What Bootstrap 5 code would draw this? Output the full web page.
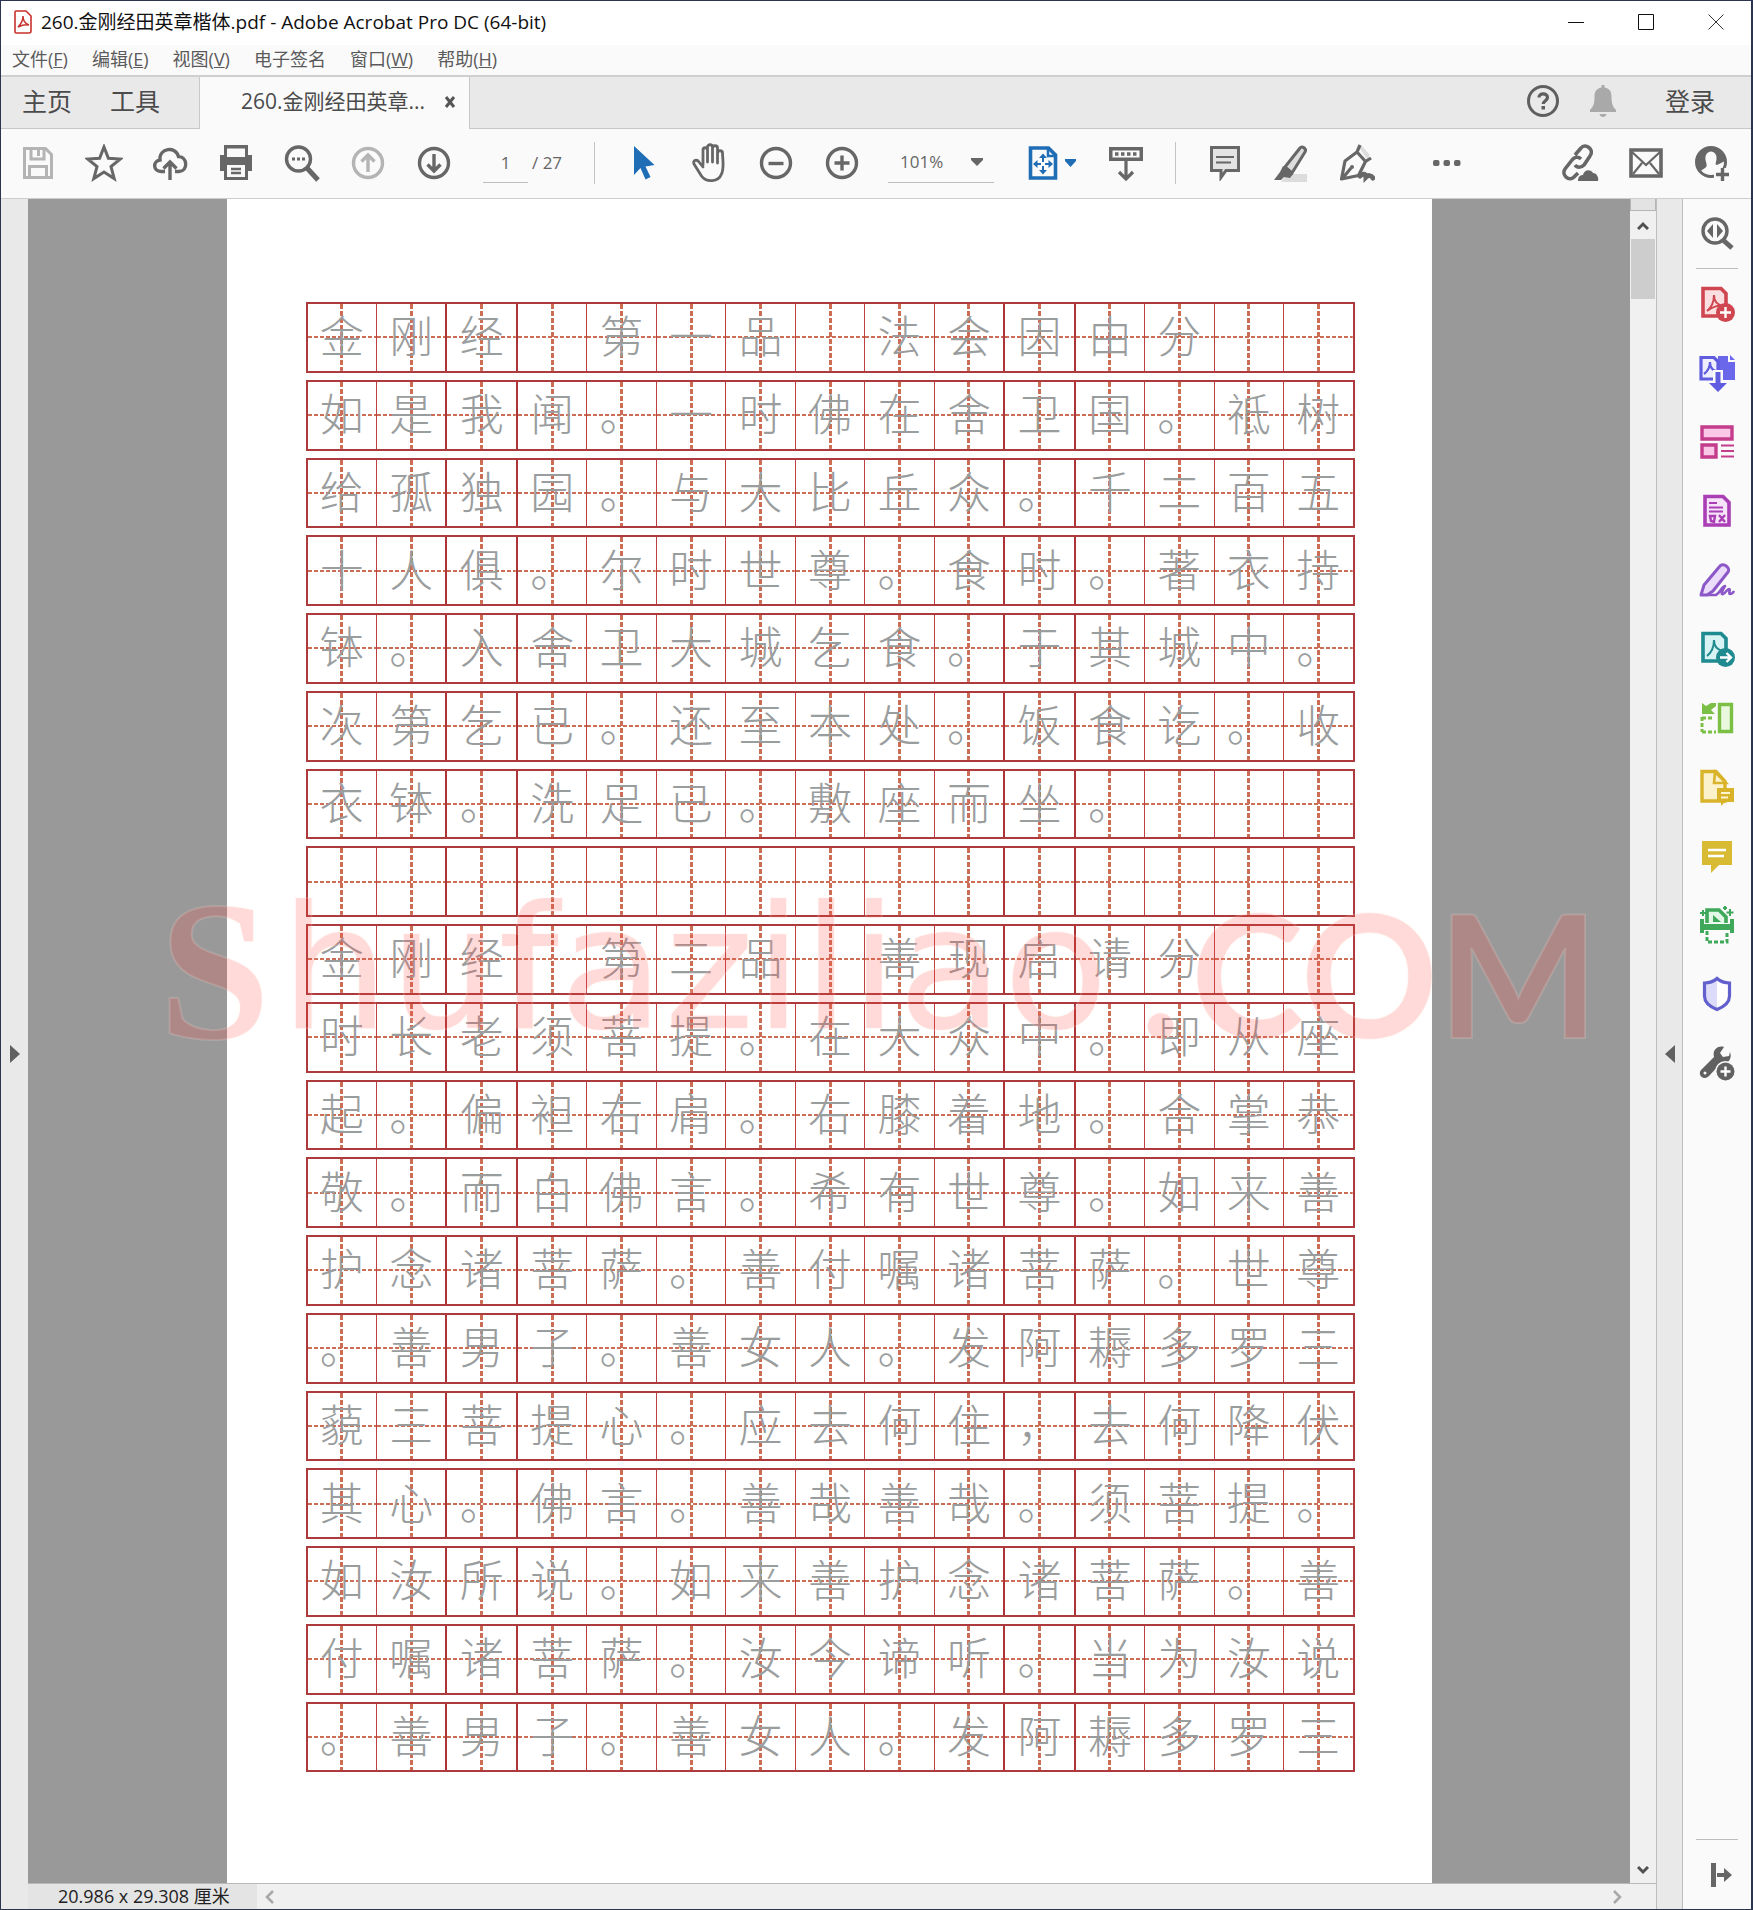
<!DOCTYPE html>
<html lang="zh-CN">
<head>
<meta charset="utf-8">
<meta name="viewport" content="width=device-width, initial-scale=1">
<title>260.金刚经田英章楷体.pdf - Adobe Acrobat Pro DC (64-bit)</title>
<link href="https://cdn.jsdelivr.net/npm/bootstrap@5.3.0/dist/css/bootstrap.min.css" rel="stylesheet">
<style>
  body { font-family: "Open Sans", "Noto Sans CJK SC", sans-serif; color: #4b4b4b; font-size: 18px; }
  .app-window { border: 1px solid #2b3550; border-right-width: 2px; background: #fafafa; }
  svg { display: block; flex: none; }
  .app-window button { border: 0; background: none; padding: 0; color: inherit; }

  .title-bar { height: 44px; background: #fff; color: #111; padding: 0 0 2px 12px; font-size: 19px; }
  .title-bar .win-btn { width: 70px; height: 42px; }
  .menu-bar { height: 30px; padding-left: 11px; gap: 24px; color: #5a5a5a; }
  .menu-bar a { color: inherit; text-decoration: none; line-height: 28px; white-space: nowrap; }

  .tab-strip { height: 54px; background: #e9e9e9; border-top: 2px solid #cfcfcf; }
  .tab-strip .rest { border-bottom: 1px solid #c8c8c8; }
  .tab-link { font-size: 25px; color: #4b4b4b; text-decoration: none; line-height: 48px; white-space: nowrap; }
  .tab-home { width: 199px; padding-left: 21px; gap: 38px; border-right: 1px solid #c8c8c8; }
  .tab-doc { width: 270px; padding: 0 13px 2px 41px; font-size: 21px; background: #fafafa; border-right: 1px solid #c8c8c8; }

  .tool-bar { height: 70px; padding: 0 6px 2px 4px; border-bottom: 1px solid #cdcdcd; color: #676767; }
  .tool-bar .tool { width: 66px; height: 60px; }
  .tool-bar .faded { color: #b4b4b4; }
  .tool-bar .blue { color: #1f6db5; }
  .tool-bar .fit { width: 83px; gap: 7px; }
  .v-rule { width: 1px; height: 42px; background: #c4c4c4; }
  .page-no { width: 45px; height: 40px; border: 0; border-bottom: 1px solid #bdbdbd; background: none; text-align: center; font-size: 17px; color: #666; padding: 0; }
  .page-total { font-size: 17px; color: #666; }
  .zoom-pick { width: 106px; height: 40px; margin: 0 16px 0 13px; padding: 0 26px 0 12px; border: 0; border-bottom: 1px solid #bdbdbd; border-radius: 0; background-color: transparent; font-size: 17px; color: #666;
    background-image: url("data:image/svg+xml,%3Csvg xmlns='http://www.w3.org/2000/svg' viewBox='0 0 12 8'%3E%3Cpath fill='%23666' d='M0 0h12v2L6 8 0 2z'/%3E%3C/svg%3E"); background-size: 12px 8px; background-position: right 11px center; }

  .rail { width: 27px; background: #e9e9e9; color: #606060; }
  .rail-right { border-left: 1px solid #bdbdbd; border-right: 1px solid #bdbdbd; }
  .canvas { background: #999; }
  .sheet { max-width: 1205px; background: #fff; padding: 103px 77px 0 79px; min-height: 100%; }

  .practice { display: flex; flex-direction: column; gap: 7px; }
  .practice-row { display: flex; border: 2px solid #ad3a3c; }
  .cell { flex: 1 1 0; aspect-ratio: 95 / 90; display: flex; align-items: center; justify-content: center; padding-bottom: 6px;
    border-left: 1px solid #bd4040; font-size: 44px; line-height: 1; font-weight: 300; color: #9a9d9e;
    font-family: "Noto Sans CJK SC", sans-serif;
    background:
      repeating-linear-gradient(to bottom, #cc6e55 0 5px, transparent 5px 7px) center / 3px 100% no-repeat,
      repeating-linear-gradient(to right, #cc6e55 0 4px, transparent 4px 6px) center / 100% 2px no-repeat; }
  .cell:first-child { border-left: 0; }
  .cell:nth-child(3), .cell:nth-child(4), .cell:nth-child(11), .cell:nth-child(12) { border-left: 2px solid #ad3436; }

  .watermark { left: 131px; top: 0; padding-top: 672px; color: rgba(255, 70, 60, .2); white-space: nowrap; line-height: 1;
    -webkit-text-stroke: 2px rgba(255, 225, 220, .18); pointer-events: none; }
  .wm-initial { font: bold 200px/1 "Liberation Serif", serif; }
  .wm-name { font: 172px/1 "DejaVu Sans", sans-serif; vertical-align: 10px; margin: 0 32px 0 10px; }
  .wm-tld { font: bold 170px/1 Lato, sans-serif; }
  .wm-dot { margin-right: 10px; }

  .scroll-v { width: 26px; background: #f0f0f0; color: #505050; }
  .scroll-v .split { height: 12px; background: #e3e3e3; border: 1px solid #b5b5b5; border-top: 0; }
  .scroll-v .thumb { height: 60px; margin: 0 1px; background: #cdcdcd; }
  .scroll-v .arrow { height: 28px; padding-top: 2px; }
  .status-bar { height: 26px; background: #f0f0f0; border-top: 1px solid #b9b9b9; color: #a8a8a8; padding-right: 34px; }
  .page-size { width: 229px; padding-left: 30px; background: #e4e4e4; color: #222; font-size: 18px; line-height: 25px; white-space: nowrap; }

  .side-tools { width: 68px; color: #666; }
  .side-tools .side-btn { height: 69px; width: 68px; }
  .h-rule { width: 42px; height: 1px; background: #bdbdbd; }
</style>
<script src="https://cdn.jsdelivr.net/npm/bootstrap@5.3.0/dist/js/bootstrap.bundle.min.js"></script>
</head>
<body>
<div class="app-window vh-100 d-flex flex-column overflow-hidden">

  <header class="title-bar d-flex align-items-center">
    <svg width="20" height="26" viewBox="0 0 20 26" fill="none" stroke="#c8322b"><path d="M3 2h10l5 5v15a2 2 0 0 1-2 2H3a1 1 0 0 1-1-1V3a1 1 0 0 1 1-1z" fill="#fff" stroke-width="1.6"/><path d="M5 18c3-3 5-7 5-11 0 5 3 8 6 9-4-1-7 0-11 2z" stroke-width="1.5"/></svg>
    <span class="ms-2 text-nowrap">260.金刚经田英章楷体.pdf - Adobe Acrobat Pro DC (64-bit)</span>
    <div class="ms-auto d-flex">
      <button class="win-btn d-flex align-items-center justify-content-center" aria-label="最小化"><svg width="16" height="16" viewBox="0 0 16 16" stroke="#111"><path d="M0 8.500h16"/></svg></button>
      <button class="win-btn d-flex align-items-center justify-content-center" aria-label="最大化"><svg width="16" height="16" viewBox="0 0 16 16" stroke="#111" fill="none"><path d="M.5.5h15v15H.5z"/></svg></button>
      <button class="win-btn d-flex align-items-center justify-content-center" aria-label="关闭"><svg width="16" height="16" viewBox="0 0 16 16" stroke="#333"><path d="M.5.5l15 15M15.500.5l-15 15"/></svg></button>
    </div>
  </header>

  <nav class="menu-bar d-flex">
    <a href="#">文件(<u>F</u>)</a><a href="#">编辑(<u>E</u>)</a><a href="#">视图(<u>V</u>)</a><a href="#">电子签名</a><a href="#">窗口(<u>W</u>)</a><a href="#">帮助(<u>H</u>)</a>
  </nav>

  <nav class="tab-strip d-flex">
    <div class="tab-home rest d-flex"><a class="tab-link" href="#">主页</a><a class="tab-link" href="#">工具</a></div>
    <div class="tab-doc d-flex align-items-center justify-content-between text-nowrap">
      <span>260.金刚经田英章...</span>
      <button aria-label="关闭标签"><svg width="12" height="12" viewBox="0 0 12 12" stroke="#555" stroke-width="3"><path d="M2 1l8 10M10 1L2 11"/></svg></button>
    </div>
    <div class="rest flex-grow-1 d-flex align-items-center justify-content-end pe-4 pb-1">
      <button class="me-4 ms-1" aria-label="帮助"><svg width="36" height="36" viewBox="0 0 36 36" fill="none" stroke="#5f5f5f"><circle cx="18" cy="18" r="14.500" stroke-width="3"/><path d="M14 14.500c0-5 8.500-4.500 8.500 0 0 3-4.300 3.300-4.300 6.500" stroke-width="3.200"/><path d="M16.500 23h3.500v3.500h-3.500z" fill="#5f5f5f" stroke="none"/></svg></button>
      <button class="ms-1 me-5" aria-label="通知"><svg width="28" height="34" viewBox="0 0 28 34" fill="#a9a9a9"><path d="M12.500 1h3v2.500C21 4.500 22.500 8 22.500 13c0 7 1.500 10 4.500 13v2H1v-2c3-3 4.500-6 4.500-13 0-5 1.500-8.500 7-9.500zM10.500 30h7c-.5 4-6.500 4-7 0z"/></svg></button>
      <a class="tab-link me-2 pe-1" href="#">登录</a>
    </div>
  </nav>

  <div class="tool-bar d-flex align-items-center" role="toolbar">
    <button class="tool faded d-flex align-items-center justify-content-center" aria-label="保存"><svg width="32" height="34" viewBox="0 0 32 34" fill="none" stroke="currentColor" stroke-width="3"><path d="M2.500 2.500h21l6 6v23h-27z"/><path d="M9 3v10h13V3M16.500 4v6M7.500 31V20.500h17V31"/></svg></button>
    <button class="tool d-flex align-items-center justify-content-center" aria-label="收藏"><svg width="38" height="38" viewBox="0 0 38 38" fill="none" stroke="currentColor" stroke-width="3"><path d="M19 3l4.400 11.300 12 .7-9.400 7.600 3.200 12L19 28 8.800 34.600l3.200-12L2.600 15l12-.7z"/></svg></button>
    <button class="tool d-flex align-items-center justify-content-center" aria-label="上传"><svg width="36" height="38" viewBox="0 0 36 38" fill="none" stroke="currentColor" stroke-width="3.400"><path d="M13 27.500H9C1 27.500.500 17 8 16 7 4 23.500 1.500 26.500 12.500c9 0 10 14.500.500 15h-4M18 36V19M11.500 24.500L18 18l6.500 6.500"/></svg></button>
    <button class="tool d-flex align-items-center justify-content-center" aria-label="打印"><svg width="34" height="36" viewBox="0 0 34 36"><path fill="currentColor" d="M5 0h24v10h4v16h-4v9H5v-9H1V10h4z"/><path fill="#fafafa" d="M8 3.500h18V12H8zM8 20h18v12H8z"/><path stroke="currentColor" stroke-width="2.500" d="M12 24h10M12 28h10"/></svg></button>
    <button class="tool d-flex align-items-center justify-content-center" aria-label="查找"><svg width="36" height="38" viewBox="0 0 36 38" fill="none" stroke="currentColor"><circle cx="14.500" cy="15" r="12" stroke-width="3.400"/><path d="M23 24l11 12" stroke-width="5"/><path d="M8 15h13" stroke-width="3" stroke-dasharray="3 2"/></svg></button>
    <button class="tool faded d-flex align-items-center justify-content-center" aria-label="上一页"><svg width="34" height="34" viewBox="0 0 34 34" fill="none" stroke="currentColor" stroke-width="3.400"><circle cx="17" cy="17" r="14.500"/><path d="M17 26V9M10.500 15.500L17 9l6.500 6.500"/></svg></button>
    <button class="tool d-flex align-items-center justify-content-center" aria-label="下一页"><svg width="34" height="34" viewBox="0 0 34 34" fill="none" stroke="currentColor" stroke-width="3.400"><circle cx="17" cy="17" r="14.500"/><path d="M17 8v17M10.500 18.500L17 25l6.500-6.500"/></svg></button>
    <input class="page-no ms-3" type="text" value="1" aria-label="页码">
    <span class="page-total ms-1 me-4 text-nowrap">/ 27</span>
    <span class="v-rule ms-2 me-3"></span>
    <button class="tool blue d-flex align-items-center justify-content-center" aria-label="选择"><svg width="22" height="36" viewBox="0 0 22 36" fill="currentColor"><path d="M1 1v29l6.500-7 5 11.500 5-2.500-5-10.500 9-1.500z"/></svg></button>
    <button class="tool d-flex align-items-center justify-content-center" aria-label="抓手"><svg width="36" height="40" viewBox="0 0 36 40" fill="none" stroke="currentColor" stroke-width="2.800" stroke-linecap="round" stroke-linejoin="round"><path d="M11 22V7c0-3 4.500-3 4.500 0v12V4c0-3 5-3 5 0v15V5c0-3 5-3 5 0v15V10c0-3 5-3 5 0 0 5 2 15-1 21-3 8-15 9-20 2L2 21c-1.500-4 3-5 5-2l4 5"/></svg></button>
    <button class="tool d-flex align-items-center justify-content-center" aria-label="缩小"><svg width="34" height="36" viewBox="0 0 34 36" fill="none" stroke="currentColor" stroke-width="3.400"><circle cx="17" cy="18" r="14.500"/><path d="M9.500 18.500h15"/></svg></button>
    <button class="tool d-flex align-items-center justify-content-center" aria-label="放大"><svg width="34" height="36" viewBox="0 0 34 36" fill="none" stroke="currentColor" stroke-width="3.400"><circle cx="17" cy="18" r="14.500"/><path d="M9.500 18h15M17 10.500v15"/></svg></button>
    <select class="zoom-pick form-select" aria-label="缩放比例"><option>101%</option></select>
    <button class="fit blue d-flex align-items-center justify-content-center" aria-label="适合页面"><svg width="30" height="34" viewBox="0 0 30 34" fill="none" stroke="currentColor"><path d="M2.500 2h18l7 7v23h-25z" stroke-width="3.600"/><path d="M20 2v8h8" stroke-width="2.500"/><path d="M15 9v18M6 18h18" stroke-width="2"/><path d="M15 7.500l-4 4.500h8zM15 28.500l-4-4.500h8zM5 18l4.500-4v8zM25 18l-4.500-4v8z" fill="currentColor" stroke="none"/><path d="M13 16h4v4h-4z" fill="#fafafa" stroke="none"/></svg><svg width="11" height="8" viewBox="0 0 11 8" fill="currentColor"><path d="M0 0h11v2L5.500 8 0 2z"/></svg></button>
    <button class="tool d-flex align-items-center justify-content-center" aria-label="滚动"><svg width="36" height="38" viewBox="0 0 36 38" fill="none" stroke="currentColor"><path d="M1 3h34v14H1z" fill="currentColor" stroke="none"/><path d="M4.500 6.500h27v7h-27z" fill="#fafafa" stroke="none"/><path d="M7 10h22" stroke-width="3.500" stroke-dasharray="3.500 2.500"/><path d="M18 17v18M11 28l7 7 7-7" stroke-width="3.200"/></svg></button>
    <span class="v-rule mx-3"></span>
    <button class="tool d-flex align-items-center justify-content-center" aria-label="添加注释"><svg width="32" height="36" viewBox="0 0 32 36" fill="#e3e3e3" stroke="currentColor"><path d="M2.500 2.500h27v23H17l-5 7v-7H2.500z" stroke-width="3"/><path d="M7 12h18M7 17.500h15" stroke-width="2.200"/></svg></button>
    <button class="tool d-flex align-items-center justify-content-center" aria-label="高亮"><svg width="36" height="38" viewBox="0 0 36 38" stroke="currentColor"><path d="M14 30h20v8H8z" fill="#dcdcdc" stroke="none"/><path d="M12 23L27 4c2-3 7 1 5 4L19 29z" fill="#ddd" stroke-width="3"/><path d="M10 22l10 8-3 4-6-1-3 3H1l6-8z" fill="currentColor" stroke="none"/></svg></button>
    <button class="tool d-flex align-items-center justify-content-center" aria-label="签名"><svg width="36" height="40" viewBox="0 0 36 40" fill="none" stroke="currentColor" stroke-width="3.200"><path d="M19 3l3-1 9 10-3 4z" fill="#ddd" stroke="none"/><path d="M21 2l-3 7L6 18 2.500 36l17-3.500 7-14L32 15M18 9l9 10M3 36l9-11" stroke-linejoin="round"/><path d="M21 33c3-3 6-2 6 1 2-2 5-2 7 1" stroke-width="5" stroke-linecap="round"/><circle cx="13" cy="24" r="2" fill="currentColor" stroke="none"/></svg></button>
    <button class="tool ms-4 d-flex align-items-center justify-content-center" aria-label="更多"><svg width="28" height="8" viewBox="0 0 28 8" fill="currentColor"><rect y="1" width="6.500" height="6" rx="2"/><rect x="10.500" y="1" width="6.500" height="6" rx="2"/><rect x="21" y="1" width="6.500" height="6" rx="2"/></svg></button>
    <div class="ms-auto d-flex">
      <button class="tool d-flex align-items-center justify-content-center" aria-label="共享链接"><svg width="38" height="40" viewBox="0 0 38 40" fill="none" stroke="currentColor" stroke-width="3.600"><path d="M14 12l6-7c4-5 14 1 9 8l-6 9c-3 3-7 3-9 0M20 16c-3-3-7-2-9 1l-7 9c-4 6 4 13 9 8l4-4"/><path d="M17 38c0-4 2-6 5-6 1-6 8-6 10-2 4 0 6 5 5 8z" fill="currentColor" stroke="none"/></svg></button>
      <button class="tool d-flex align-items-center justify-content-center" aria-label="电子邮件"><svg width="34" height="32" viewBox="0 0 34 32" fill="none" stroke="currentColor"><path d="M2 3h30v26H2z" stroke-width="3.600"/><path d="M3 5l14 13L31 5M4 27l9-11M30 27l-9-11" stroke-width="2.200"/></svg></button>
      <button class="tool d-flex align-items-center justify-content-center" aria-label="添加人员"><svg width="36" height="38" viewBox="0 0 36 38"><circle cx="17" cy="18" r="14.500" fill="none" stroke="currentColor" stroke-width="3"/><path fill="currentColor" d="M3 20C3 8 8 3 17 3s14 5 14 14l-8 4c-1 0-2-1-1-3 4-14-14-14-10 0 1 3 1 5-1 6l-6 4z"/><path fill="#fafafa" d="M20 24h16v14H20z"/><path stroke="currentColor" stroke-width="3.400" d="M28.500 24v13M22 30.500h13"/></svg></button>
    </div>
  </div>

  <div class="d-flex flex-grow-1 overflow-hidden">
    <div class="rail d-flex align-items-center justify-content-center"><svg width="10" height="18" viewBox="0 0 10 18" fill="currentColor"><path d="M0 0l10 9-10 9z"/></svg></div>

    <div class="d-flex flex-column flex-grow-1 overflow-hidden">
      <div class="d-flex flex-grow-1 overflow-hidden">
        <main class="canvas flex-grow-1 position-relative overflow-hidden">
          <article class="sheet mx-auto"><div class="practice" id="practice"></div></article>
          <div class="watermark position-absolute"><span class="wm-initial">S</span><span class="wm-name">hufaziliao</span><span class="wm-tld"><span class="wm-dot">.</span>COM</span></div>
        </main>

        <div class="scroll-v d-flex flex-column">
          <div class="split"></div>
          <button class="arrow d-flex align-items-center justify-content-center" aria-label="向上滚动"><svg width="12" height="10" viewBox="0 0 12 10" fill="none" stroke="currentColor" stroke-width="3"><path d="M1 8l5-5 5 5"/></svg></button>
          <div class="thumb"></div>
          <button class="arrow mt-auto d-flex align-items-center justify-content-center" aria-label="向下滚动"><svg width="12" height="10" viewBox="0 0 12 10" fill="none" stroke="currentColor" stroke-width="3"><path d="M1 2l5 5 5-5"/></svg></button>
        </div>
      </div>
      <footer class="status-bar d-flex align-items-center">
        <span class="page-size">20.986 x 29.308 厘米</span>
        <button class="ms-2" aria-label="向左滚动"><svg width="10" height="14" viewBox="0 0 10 14" fill="none" stroke="currentColor" stroke-width="2.500"><path d="M8 1L2 7l6 6"/></svg></button>
        <button class="ms-auto" aria-label="向右滚动"><svg width="10" height="14" viewBox="0 0 10 14" fill="none" stroke="currentColor" stroke-width="2.500"><path d="M2 1l6 6-6 6"/></svg></button>
      </footer>
    </div>

    <div class="rail rail-right d-flex align-items-center justify-content-center"><svg width="10" height="18" viewBox="0 0 10 18" fill="currentColor"><path d="M10 0L0 9l10 9z"/></svg></div>

    <aside class="side-tools d-flex flex-column align-items-center">
      <button class="side-btn d-flex align-items-center justify-content-center" aria-label="搜索工具"><svg width="36" height="36" viewBox="0 0 36 36" fill="none" stroke="currentColor"><circle cx="16" cy="15" r="12" stroke-width="3.400"/><path d="M24 24l9 8" stroke-width="5"/><path d="M14 8v14l-6-7zM18 8v14l6-7z" fill="currentColor" stroke="none"/></svg></button>
      <span class="h-rule"></span>
      <button class="side-btn d-flex align-items-center justify-content-center" aria-label="创建 PDF"><svg width="36" height="36" viewBox="0 0 36 36" fill="none" stroke="#cf4650"><path d="M4 2.500h18l5 5V30H4z" fill="#fbdfe0" stroke-width="3.600"/><path d="M8 25c5-4 7-9 7-16 0 7 4 10 9 11-6-1-10 1-16 5z" stroke-width="2"/><circle cx="26.500" cy="26.500" r="9.500" fill="#cf4650" stroke="none"/><path d="M26.500 21v11M21 26.500h11" stroke="#fff" stroke-width="2.400"/></svg></button>
      <button class="side-btn d-flex align-items-center justify-content-center" aria-label="导出 PDF"><svg width="38" height="38" viewBox="0 0 38 38" fill="none" stroke="#5f5ce0"><path d="M20 2h10v6h7v18H20z" fill="#6a67ea" stroke="none"/><path d="M32 1l5 5h-5z" fill="#6a67ea" stroke="none"/><path d="M3 3.500h13l4 4V25H3z" fill="#eeeefe" stroke-width="3.200"/><path d="M6 20c4-3 6-7 6-12 0 5 2 8 6 9" stroke-width="2.200"/><path d="M15 16h10v11h7L20 39 8 27h7z" fill="#fafafa" stroke="none"/><path d="M17.500 18h5v11h6.500L20 38l-9-9h6.500z" fill="#5f5ce0" stroke="none"/></svg></button>
      <button class="side-btn d-flex align-items-center justify-content-center" aria-label="组织页面"><svg width="36" height="36" viewBox="0 0 36 36" fill="#fac8e6" stroke="#c43c8c" stroke-width="3.400"><path d="M3 3h30v12H3zM3 21h14v12H3z"/><path d="M22 21.500h13M22 27h13M22 32.500h13" stroke-width="2"/></svg></button>
      <button class="side-btn d-flex align-items-center justify-content-center" aria-label="准备表单"><svg width="30" height="34" viewBox="0 0 30 34" fill="#f7e3fa" stroke="#aa3fb5"><path d="M3 2.500h18l6 6V31H3z" stroke-width="3.600"/><path d="M7 9h8M7 13.500h14M7 17.500h14" stroke-width="2"/><path d="M8 22h5l-1 6-3-1zM17 21l6 7M23 21l-6 7" stroke-width="2.400"/></svg></button>
      <button class="side-btn d-flex align-items-center justify-content-center" aria-label="填写和签名"><svg width="38" height="36" viewBox="0 0 38 36" fill="#eadcfa" stroke="#8c57c8" stroke-width="3" stroke-linejoin="round"><path d="M3 33l3-10L22 4c3-4 11 2 8 6L15 29 9 33z"/><path d="M9 33h9c4-2 6-9 9-9-2 3-5 9-2 8s4-5 6-5-1 5 1 5 3-1 4-3" fill="none" stroke-width="2.600"/></svg></button>
      <button class="side-btn d-flex align-items-center justify-content-center" aria-label="发送以供审阅"><svg width="36" height="36" viewBox="0 0 36 36" fill="none" stroke="#1f8a90"><path d="M4 2.500h18l5 5V30H4z" fill="#d8f3f3" stroke-width="3.600"/><path d="M8 25c5-4 7-9 7-16 0 7 4 10 9 11" stroke-width="2"/><circle cx="26.500" cy="26.500" r="9.500" fill="#1f8a90" stroke="none"/><path d="M21 26.500h10M27.500 22l4.500 4.500-4.500 4.500" stroke="#fff" stroke-width="2.400"/></svg></button>
      <button class="side-btn d-flex align-items-center justify-content-center" aria-label="合并文件"><svg width="36" height="34" viewBox="0 0 36 34" fill="none" stroke="#7cbf45"><path d="M20.500 3.500h12v27h-12z" fill="#eaf8dd" stroke-width="3.400"/><path d="M3 16v15M3 17h12M3 31h14" stroke-width="3" stroke-dasharray="4 2"/><path d="M3 2l4 3 5-3h5v3l-5 4 4 4H3z" fill="#7cbf45" stroke="none"/></svg></button>
      <button class="side-btn d-flex align-items-center justify-content-center" aria-label="编辑 PDF"><svg width="36" height="38" viewBox="0 0 36 38" fill="none" stroke="#d9b32a"><path d="M3 3.500h14l9 10V33H3z" fill="#fbf2cc" stroke-width="3.400"/><path d="M16 4l-1 11h12z" fill="#fbf2cc" stroke-width="2.600"/><path d="M18 20h17v14H26l-4 4v-4h-4z" fill="#d9b32a" stroke="none"/><path d="M22 25h9M22 29.500h7" stroke="#fff6d0" stroke-width="2"/></svg></button>
      <button class="side-btn d-flex align-items-center justify-content-center" aria-label="注释"><svg width="32" height="34" viewBox="0 0 32 34"><path d="M1 2h30v24H18l-8 8v-8H1z" fill="#d8bb32"/><path d="M7 11h18M7 17h16" stroke="#fff" stroke-width="2.400"/></svg></button>
      <button class="side-btn d-flex align-items-center justify-content-center" aria-label="扫描和 OCR"><svg width="36" height="38" viewBox="0 0 36 38" fill="none" stroke="#3fa85a"><path d="M8 17V4h12l7 7v6" fill="#e2f7e6" stroke-width="3.600"/><path d="M14 9v7h8z" fill="#3fa85a" stroke="none"/><path d="M1 13h4v5h26v-5h4v14h-4v-3H5v3H1z" fill="#3fa85a" stroke="none"/><path d="M8 25v11h20V25" stroke-width="3" stroke-dasharray="4 2"/><path d="M31 3v7M27.500 6.500h7M4 4v6M1 7h6M26 0v4M24 2h4" stroke-width="2"/></svg></button>
      <button class="side-btn d-flex align-items-center justify-content-center" aria-label="保护"><svg width="30" height="36" viewBox="0 0 30 36"><path d="M15 3c4 3 8 4 12 4v13c0 6-5 10-12 13z" fill="#fff"/><path d="M15 3C11 6 7 7 3 7v13c0 6 5 10 12 13z" fill="#dcdcfa"/><path d="M15 2.500C11 6 7 7 2.500 7v13c0 6 5 10.500 12.500 13.500C22.500 30.500 27.500 26 27.500 20V7C23 7 19 6 15 2.500z" fill="none" stroke="#6260cc" stroke-width="3.200"/></svg></button>
      <button class="side-btn d-flex align-items-center justify-content-center" aria-label="更多工具"><svg width="36" height="36" viewBox="0 0 36 36" fill="#616161"><path d="M2 25l13-13C13 5 19 0 25 2l-4 6 3 4 6-1 1-4c3 8-4 13-10 12L10 31c-5 5-12-1-8-6z"/><circle cx="6" cy="28" r="1.500" fill="#fafafa"/><circle cx="26.500" cy="26.500" r="10.500" fill="#fafafa"/><circle cx="26.500" cy="26.500" r="9"/><path d="M26.500 21.500v10M21.500 26.500h10" stroke="#fff" stroke-width="2.400"/></svg></button>
      <span class="h-rule mt-auto"></span>
      <button class="side-btn ps-2 d-flex align-items-center justify-content-center" aria-label="折叠面板"><svg width="24" height="26" viewBox="0 0 24 26" fill="currentColor"><path d="M2 1h5v24H2zM8 11h7V6l8 7-8 7v-5H8z"/></svg></button>
    </aside>
  </div>
</div>

<script>
  // One string per line of the copybook, 15 squares each; a space leaves the square empty.
  const lines = [
    "金刚经 第一品 法会因由分",
    "如是我闻。一时佛在舍卫国。祗树",
    "给孤独园。与大比丘众。千二百五",
    "十人俱。尔时世尊。食时。著衣持",
    "钵。入舍卫大城乞食。于其城中。",
    "次第乞已。还至本处。饭食讫。收",
    "衣钵。洗足已。敷座而坐。",
    "",
    "金刚经 第二品 善现启请分",
    "时长老须菩提。在大众中。即从座",
    "起。偏袒右肩。右膝着地。合掌恭",
    "敬。而白佛言。希有世尊。如来善",
    "护念诸菩萨。善付嘱诸菩萨。世尊",
    "。善男子。善女人。发阿耨多罗三",
    "藐三菩提心。应去何住，去何降伏",
    "其心。佛言。善哉善哉。须菩提。",
    "如汝所说。如来善护念诸菩萨。善",
    "付嘱诸菩萨。汝今谛听。当为汝说",
    "。善男子。善女人。发阿耨多罗三"
  ];
  const sheet = document.getElementById("practice");
  for (const line of lines) {
    const row = document.createElement("div");
    row.className = "practice-row";
    for (const ch of line.padEnd(15)) {
      const cell = document.createElement("span");
      cell.className = "cell";
      cell.textContent = ch.trim();
      row.append(cell);
    }
    sheet.append(row);
  }
</script>
</body>
</html>
